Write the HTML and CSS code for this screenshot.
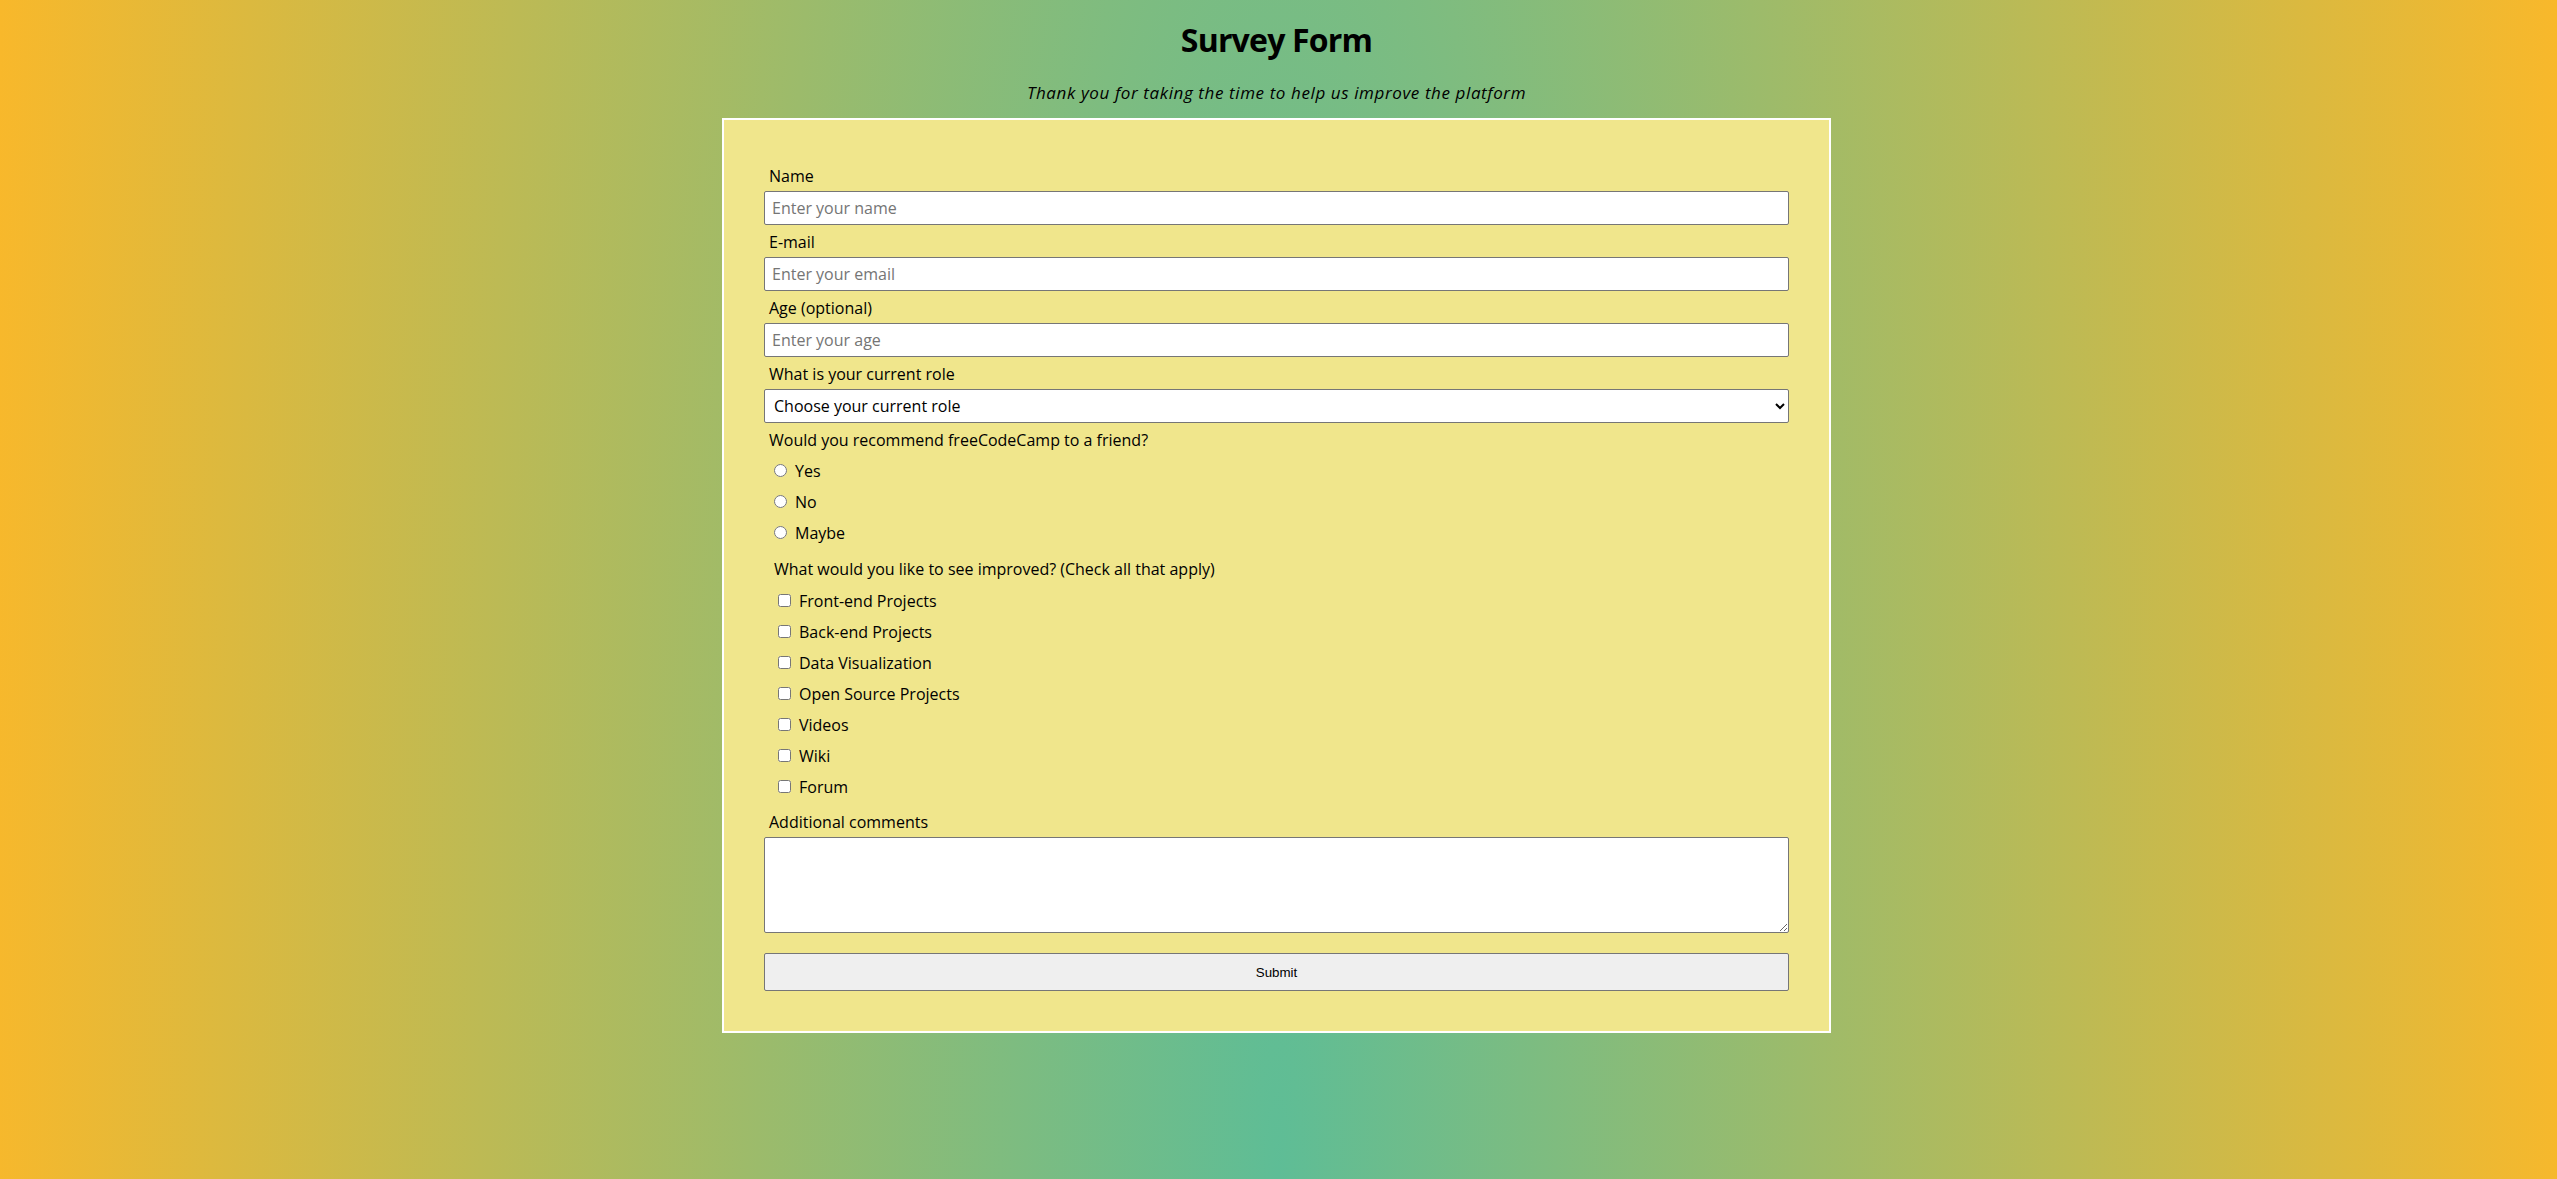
FILE: index.html
```html
<!DOCTYPE html>
<html lang="en">
<head>
<meta charset="utf-8">
<title>Survey Form</title>
<link rel="stylesheet" href="styles.css">
</head>
<body>
<header class="header">
  <h1 id="title" class="title">Survey Form</h1>
  <p id="description" class="description">Thank you for taking the time to help us improve the platform</p>
</header>
<form id="survey-form" class="survey">
  <label class="lbl" id="name-label" for="name">Name</label>
  <input class="field" id="name" type="text" placeholder="Enter your name">
  <label class="lbl" id="email-label" for="email">E-mail</label>
  <input class="field" id="email" type="email" placeholder="Enter your email">
  <label class="lbl" id="number-label" for="number">Age (optional)</label>
  <input class="field" id="number" type="number" placeholder="Enter your age">
  <label class="lbl" for="dropdown">What is your current role</label>
  <select class="field select" id="dropdown">
    <option>Choose your current role</option>
    <option>Student</option>
    <option>Full time job</option>
    <option>Full time learner</option>
    <option>Prefer not to say</option>
    <option>Other</option>
  </select>
  <p class="lbl">Would you recommend freeCodeCamp to a friend?</p>
  <div class="group radios">
    <label class="opt"><input type="radio" name="rec" value="yes"><span>Yes</span></label>
    <label class="opt"><input type="radio" name="rec" value="no"><span>No</span></label>
    <label class="opt"><input type="radio" name="rec" value="maybe"><span>Maybe</span></label>
  </div>
  <p class="lbl lbl-sub">What would you like to see improved? (Check all that apply)</p>
  <div class="group checks">
    <label class="opt"><input type="checkbox" value="front"><span>Front-end Projects</span></label>
    <label class="opt"><input type="checkbox" value="back"><span>Back-end Projects</span></label>
    <label class="opt"><input type="checkbox" value="data"><span>Data Visualization</span></label>
    <label class="opt"><input type="checkbox" value="oss"><span>Open Source Projects</span></label>
    <label class="opt"><input type="checkbox" value="videos"><span>Videos</span></label>
    <label class="opt"><input type="checkbox" value="wiki"><span>Wiki</span></label>
    <label class="opt"><input type="checkbox" value="forum"><span>Forum</span></label>
  </div>
  <label class="lbl lbl-after" for="comments">Additional comments</label>
  <textarea class="comments" id="comments"></textarea>
  <button class="submit" id="submit" type="submit">Submit</button>
</form>
</body>
</html>
```
FILE: styles.css
```css
html {
  min-height: 100%;
  background: radial-gradient(ellipse 1500px 8000px at 50% 100%, #5ebd96 0%, #fbb829 88%);
}

body {
  margin: 0;
  padding: 20px 4px 0 0;
  font-family: "Open Sans", "Noto Sans", sans-serif;
  color: #000;
}

.header {
  text-align: center;
}

.title {
  margin: 0;
  font-size: 32px;
  line-height: 40px;
  font-weight: 700;
  letter-spacing: -0.8px;
}

.description {
  margin: 23px 0 0;
  font-size: 17px;
  line-height: 20px;
  font-style: italic;
  letter-spacing: 0.6px;
}

.survey {
  width: 1025px;
  margin: 15px auto 0;
  padding: 46px 40px 40px;
  background: #f0e68c;
  border: 2px solid #fff;
}

.lbl {
  display: block;
  margin: 0 0 5px;
  padding-left: 5px;
  font-size: 16px;
  line-height: 20px;
}

.lbl-sub {
  margin-top: 11px;
  padding-left: 10px;
  margin-bottom: 6px;
}

.lbl-after {
  margin-top: 10px;
}

.field {
  display: block;
  box-sizing: border-box;
  width: 100%;
  height: 34px;
  margin: 0 0 7px;
  padding: 0 7px;
  border: 1px solid #767676;
  border-radius: 2px;
  background: #fff;
  font-family: "Open Sans", "Noto Sans", sans-serif;
  font-size: 16px;
  color: #000;
}

.field::placeholder {
  color: #757575;
}

.select {
  padding: 0 5px;
}

.group {
  display: flex;
  flex-direction: column;
}

.opt {
  display: flex;
  align-items: center;
  height: 31px;
  font-size: 16px;
}

.opt input {
  width: 13px;
  height: 13px;
  margin: 0 8px 0 0;
}

.radios .opt {
  padding-left: 10px;
}

.checks .opt {
  padding-left: 14px;
}

.comments {
  display: block;
  box-sizing: border-box;
  width: 100%;
  height: 96px;
  margin: 0 0 20px;
  border: 1px solid #767676;
  border-radius: 2px;
  background: #fff;
}

.submit {
  display: block;
  box-sizing: border-box;
  width: 100%;
  height: 38px;
  margin: 0;
  border: 1px solid #767676;
  border-radius: 2px;
  background: #efefef;
  font-family: "Liberation Sans", Arial, sans-serif;
  font-size: 13.33px;
  color: #000;
}
```
